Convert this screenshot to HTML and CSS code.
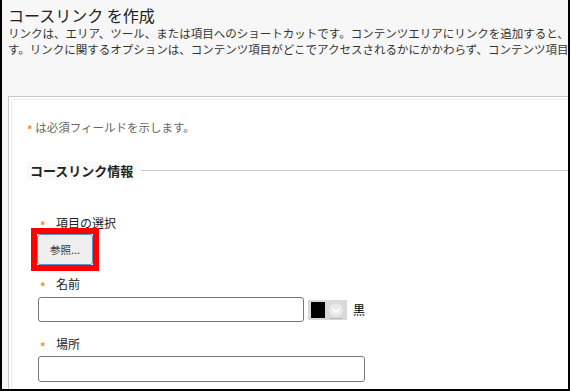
FILE: index.html
```html
<!DOCTYPE html>
<html lang="ja">
<head>
    <meta charset="UTF-8">
    <title>コースリンク を作成</title>
    <link rel="stylesheet" href="styles.css">
</head>
<body>
    <div class="frame">
        <div class="page">
            <h1 class="title">コースリンク を作成</h1>
            <p class="intro">リンクは、エリア、ツール、または項目へのショートカットです。コンテンツエリアにリンクを追加すると、ユーザーはリンク先の項目に直接アクセスできるようになりま<br>す。リンクに関するオプションは、コンテンツ項目がどこでアクセスされるかにかかわらず、コンテンツ項目に適用されます。</p>
        </div>

        <div class="panel">
            <div class="panel-inner">
                <p class="req"><span class="star">*</span> は必須フィールドを示します。</p>

                <div class="legend">
                    <span class="legend-text">コースリンク情報</span>
                    <span class="legend-line"></span>
                </div>

                <div class="field field-item">
                    <div class="label"><span class="star">*</span>項目の選択</div>
                    <div class="highlight">
                        <button class="browse">参照...</button>
                    </div>
                </div>

                <div class="field field-name">
                    <div class="label"><span class="star">*</span>名前</div>
                    <div class="input-row">
                        <input class="text-input name-input" type="text">
                        <div class="swatch">
                            <span class="swatch-color"></span>
                            <svg class="swatch-arrow" width="18" height="18" viewBox="0 0 18 18">
                                <circle cx="9" cy="9" r="7" fill="#e9e9e9"/>
                                <path d="M5.5 8 L9 11 L12.5 8" fill="none" stroke="#fff" stroke-width="2"/>
                                <rect x="3" y="17" width="12" height="1" fill="#b5b5b5"/>
                            </svg>
                        </div>
                        <span class="swatch-name">黒</span>
                    </div>
                </div>

                <div class="field field-place">
                    <div class="label"><span class="star">*</span>場所</div>
                    <input class="text-input place-input" type="text">
                </div>
            </div>
        </div>
    </div>
</body>
</html>
```

FILE: styles.css
```css
body {
    margin: 0;
    font-family: "Noto Sans CJK JP", "Noto Sans", sans-serif;
    background: #fff;
}

.frame {
    width: 570px;
    height: 391px;
    box-sizing: border-box;
    border: 2px solid #000;
    border-top: none;
    background: #f7f7f7;
    overflow: hidden;
}

.page {
    padding-left: 6px;
    white-space: nowrap;
}

.title {
    margin: 0;
    padding-top: 5px;
    font-size: 16px;
    line-height: 20px;
    font-weight: normal;
    color: #222;
}

.intro {
    margin: 0;
    font-size: 11.5px;
    line-height: 16px;
    color: #333;
}

.panel {
    margin-top: 39px;
    margin-left: 6px;
    width: 700px;
    height: 400px;
    border: 1px solid #c8c8c8;
    padding: 2px;
    background: #fff;
}

.panel-inner {
    height: 100%;
    border: 1px solid #ececec;
    padding: 19px 0 0 15px;
}

.star {
    color: #f39019;
    font-size: 11px;
    font-weight: bold;
    line-height: 0;
    vertical-align: -2px;
}

.req {
    margin: 0;
    height: 16px;
    font-size: 11.5px;
    line-height: 16px;
    color: #666;
}

.legend {
    display: flex;
    align-items: center;
    margin-top: 26px;
    height: 18px;
}

.legend-text {
    padding: 0 4px 0 3px;
    background: #fafafa;
    font-size: 13px;
    font-weight: bold;
    color: #222;
}

.legend-line {
    flex: 1;
    height: 1px;
    margin-left: 4px;
    background: #c8c8c8;
}

.field {
    margin-left: 11px;
}

.field-item {
    margin-top: 36px;
}

.field-name {
    margin-top: 5px;
}

.field-place {
    margin-top: 14px;
}

.label {
    height: 16px;
    font-size: 12px;
    line-height: 16px;
    color: #222;
}

.label .star {
    display: inline-block;
    width: 16px;
    padding-left: 2px;
}

.highlight {
    display: inline-block;
    margin-top: -3px;
    margin-left: -7px;
    border: 6px solid #f00;
}

.browse {
    display: block;
    width: 56px;
    height: 31px;
    box-sizing: border-box;
    border: 1px solid #5b93cc;
    border-radius: 3px;
    background: #efefef;
    font-family: inherit;
    font-size: 10.5px;
    color: #333;
    padding: 0;
}

.input-row {
    display: flex;
    align-items: center;
    margin-top: 5px;
}

.text-input {
    display: block;
    box-sizing: border-box;
    border: 1px solid #777;
    border-radius: 3px;
    background: #fff;
    margin: 0;
}

.name-input {
    width: 266px;
    height: 25px;
}

.place-input {
    width: 327px;
    height: 26px;
    margin-top: 4px;
}

.swatch {
    display: flex;
    align-items: center;
    margin-left: 4px;
    width: 39px;
    height: 20px;
    padding-left: 3px;
    box-sizing: border-box;
    background: #d9d9d9;
}

.swatch-color {
    width: 14px;
    height: 16px;
    background: #000;
}

.swatch-arrow {
    margin-left: 2px;
}

.swatch-name {
    margin-left: 6px;
    font-size: 12px;
    color: #000;
}
```
